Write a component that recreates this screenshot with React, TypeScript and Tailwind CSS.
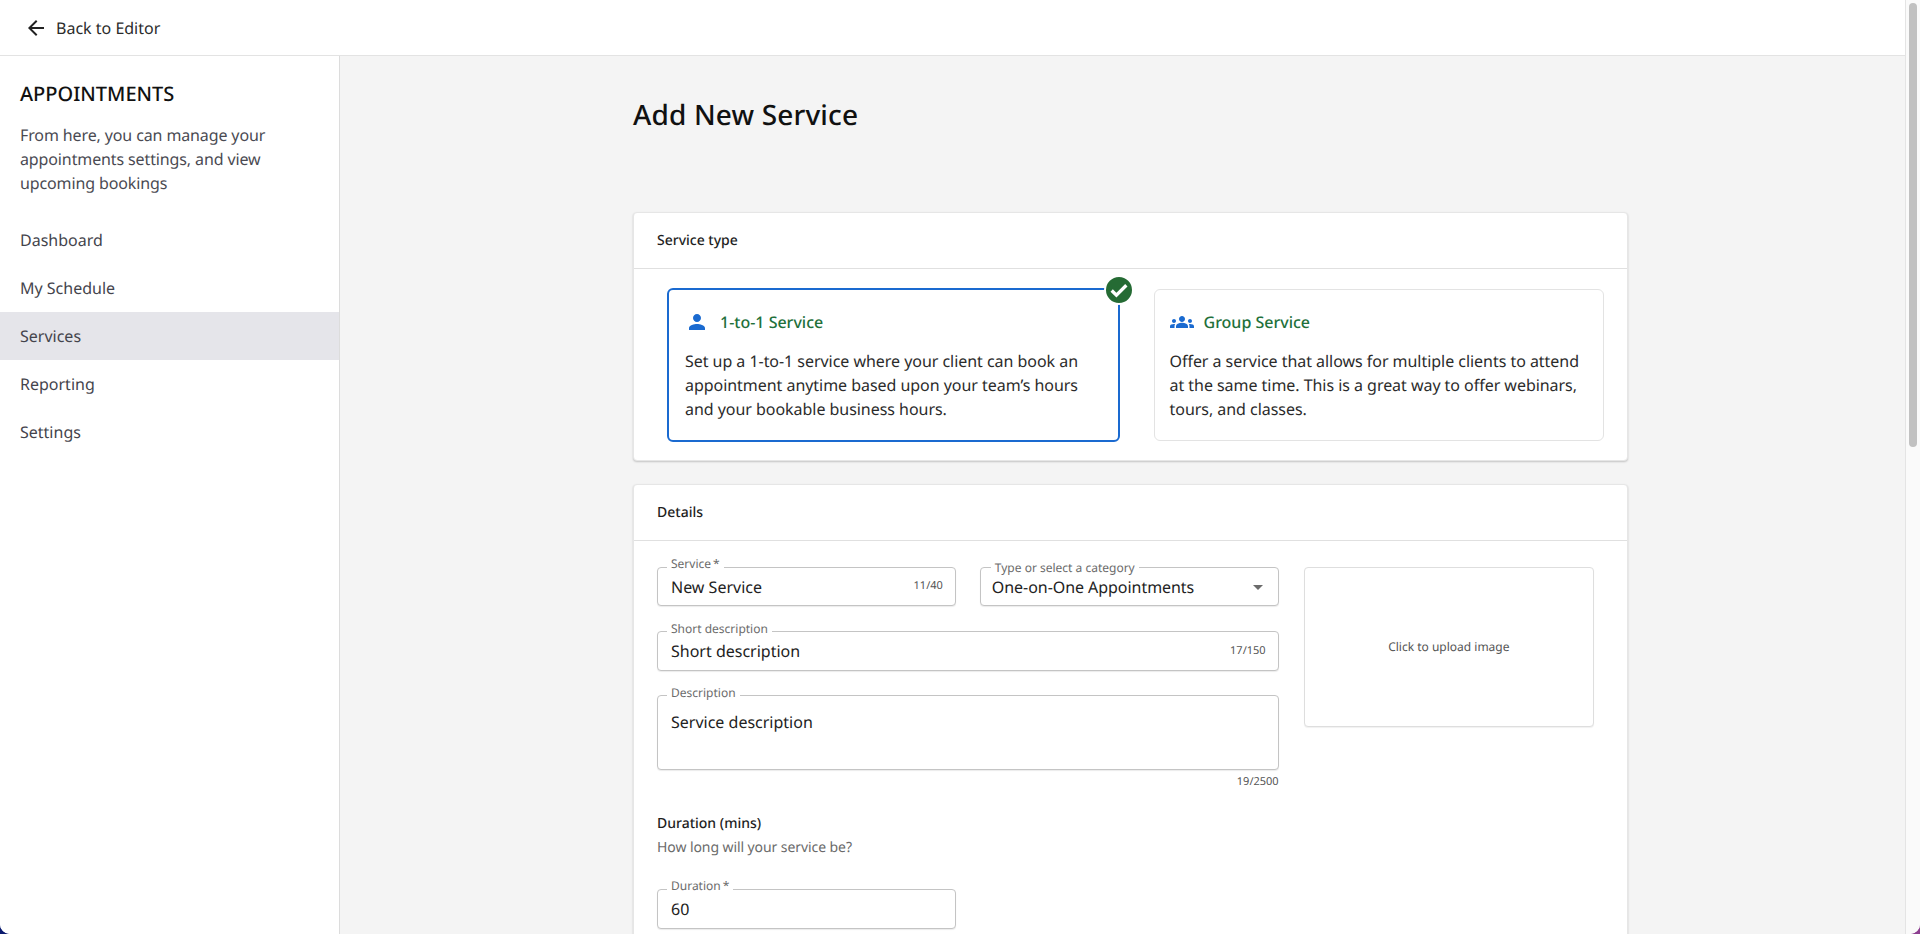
import React from "react";

const font = { fontFamily: '"Noto Sans", sans-serif' };

function Field({ label, top = "-top-[11px]", left = "left-[9px]", className = "", children }: { label: string; top?: string; left?: string; className?: string; children: React.ReactNode }) {
  return (
    <div className={`relative rounded-[4px] border border-[#c4c4c4] bg-white shadow-[0_1px_1px_rgba(0,0,0,0.08)] ${className}`}>
      <span className={`absolute ${top} ${left} bg-white px-[4px] text-[12px] leading-[16px] text-[#6b6b6b]`}>{label}</span>
      {children}
    </div>
  );
}

function Card({ title, children }: { title: string; children: React.ReactNode }) {
  return (
    <section className="rounded-[4px] border border-[#e6e6e6] bg-white shadow-[0_1px_2px_rgba(0,0,0,0.2)]">
      <h2 className="flex h-[56px] items-center border-b border-[#e0e0e0] pl-[23px] text-[14px] font-medium text-[#1f1f1f]">{title}</h2>
      {children}
    </section>
  );
}

export default function App() {
  return (
    <div style={font} className="h-screen w-screen overflow-hidden bg-gradient-to-r from-[#0a1a6e] to-[#8d3f90] [text-rendering:geometricPrecision]">
      <div className="flex h-full overflow-hidden rounded-b-[10px] bg-white">
        <div className="flex min-w-0 flex-1 flex-col">
          <header className="flex h-[56px] shrink-0 items-center border-b border-[#e3e3e3] bg-white pl-[24px] text-[16px] text-[#2b2b2b]">
            <svg width="24" height="24" viewBox="0 0 24 24" fill="#222" className="mr-[8px]">
              <path d="M20 11H7.83l5.59-5.59L12 4l-8 8 8 8 1.41-1.41L7.83 13H20v-2z" />
            </svg>
            Back to Editor
          </header>
          <div className="flex min-h-0 flex-1">
            <aside className="w-[340px] shrink-0 border-r border-[#dcdcdc] bg-white">
              <h1 className="mt-[24px] pl-[20px] text-[20px] font-medium leading-[28px] text-[#111]">APPOINTMENTS</h1>
              <p className="mt-[15px] pl-[20px] pr-[40px] text-[16px] leading-[24px] tracking-[-0.12px] text-[#4a4a52]">
                From here, you can manage your appointments settings, and view upcoming bookings
              </p>
              <nav className="mt-[21px] text-[16px] text-[#44444c]">
                <div className="flex h-[48px] items-center pl-[20px]">Dashboard</div>
                <div className="flex h-[48px] items-center pl-[20px]">My Schedule</div>
                <div className="flex h-[48px] items-center bg-[#e5e5ea] pl-[20px]">Services</div>
                <div className="flex h-[48px] items-center pl-[20px]">Reporting</div>
                <div className="flex h-[48px] items-center pl-[20px]">Settings</div>
              </nav>
            </aside>
            <main className="min-w-0 flex-1 overflow-hidden bg-[#f4f4f4] pl-[293px]">
              <div className="w-[995px]">
                <h1 className="pt-[39px] text-[28px] font-medium leading-[40px] tracking-[0.15px] text-[#111]">Add New Service</h1>
                <div className="mt-[77px] flex flex-col gap-[23px]">
                  <Card title="Service type">
                    <div className="grid grid-cols-2 gap-[35px] pb-[19px] pl-[34px] pr-[23px] pt-[20px]">
                      <div className="relative -m-px rounded-[6px] border-2 border-[#1a6ad0] pb-[19px] pl-[16px] pr-[15px] pt-[16px]">
                        <div className="flex h-[32px] items-center gap-[11px] text-[16px] font-medium text-[#22703a]">
                          <svg width="24" height="24" viewBox="0 0 24 24" fill="#1a6ad0">
                            <path d="M12 12c2.21 0 4-1.79 4-4s-1.79-4-4-4-4 1.79-4 4 1.79 4 4 4zm0 2c-2.67 0-8 1.34-8 4v2h16v-2c0-2.66-5.33-4-8-4z" />
                          </svg>
                          1-to-1 Service
                        </div>
                        <p className="mt-[11px] text-[16px] leading-[24px] tracking-[-0.04px] text-[#2b2b2b]">
                          Set up a 1-to-1 service where your client can book an appointment anytime based upon your team’s hours and your bookable business hours.
                        </p>
                        <span className="absolute -right-[16px] -top-[15px] flex h-[30px] w-[30px] items-center justify-center rounded-full border-2 border-white bg-[#256b34]">
                          <svg width="22" height="22" viewBox="0 0 24 24" fill="none" stroke="#fff" strokeWidth="3.6">
                            <path d="M4 12.5l5.2 5.2L20 6.8" />
                          </svg>
                        </span>
                      </div>
                      <div className="rounded-[6px] border border-[#e3e3e3] px-[15px] pb-[19px] pt-[16px]">
                        <div className="flex h-[32px] items-center gap-[10px] text-[16px] font-medium text-[#22703a]">
                          <svg width="24" height="24" viewBox="0 0 24 24" fill="#1a6ad0">
                            <path d="M4,13c1.1,0,2-0.9,2-2c0-1.1-0.9-2-2-2s-2,0.9-2,2C2,12.1,2.9,13,4,13z M5.13,14.1C4.76,14.04,4.39,14,4,14 c-0.99,0-1.93,0.21-2.78,0.58C0.48,14.9,0,15.62,0,16.43V18l4.5,0v-1.61C4.5,15.56,4.73,14.78,5.13,14.1z M20,13c1.1,0,2-0.9,2-2 c0-1.1-0.9-2-2-2s-2,0.9-2,2C18,12.1,18.9,13,20,13z M24,16.43c0-0.81-0.48-1.53-1.22-1.85C21.93,14.21,20.99,14,20,14 c-0.39,0-0.76,0.04-1.13,0.1c0.4,0.68,0.63,1.46,0.63,2.29V18l4.5,0V16.43z M16.24,13.65c-1.17-0.52-2.61-0.9-4.24-0.9 c-1.63,0-3.07,0.39-4.24,0.9C6.68,14.13,6,15.21,6,16.39V18h12v-1.61C18,15.21,17.32,14.13,16.24,13.65z M12,12c1.66,0,3-1.34,3-3 c0-1.66-1.34-3-3-3S9,7.34,9,9C9,10.66,10.34,12,12,12z" />
                          </svg>
                          Group Service
                        </div>
                        <p className="mt-[11px] text-[16px] leading-[24px] tracking-[-0.04px] text-[#2b2b2b]">
                          Offer a service that allows for multiple clients to attend at the same time. This is a great way to offer webinars, tours, and classes.
                        </p>
                      </div>
                    </div>
                  </Card>
                  <Card title="Details">
                    <div className="flex gap-[25px] pl-[23px] pr-[33px] pt-[26px]">
                      <div className="w-[623px]">
                        <div className="grid grid-cols-2 gap-[24px]">
                          <Field label={"Service\u2009*"} top="-top-[12px]" className="flex h-[39px] items-center justify-between pl-[13px] pr-[12px]">
                            <span className="text-[16px] text-[#222]">New Service</span>
                            <span className="text-[11px] text-[#555]">11/40</span>
                          </Field>
                          <Field label="Type or select a category" top="-top-[8px]" left="left-[10px]" className="flex h-[39px] items-center justify-between pl-[11px] pr-[8px]">
                            <span className="text-[16px] tracking-[-0.05px] text-[#222]">One-on-One Appointments</span>
                            <svg width="24" height="24" viewBox="0 0 24 24" fill="#6b6b6b">
                              <path d="M7 10l5 5 5-5z" />
                            </svg>
                          </Field>
                        </div>
                        <Field label="Short description" top="-top-[11px]" className="mt-[25px] flex h-[40px] items-center justify-between pl-[13px] pr-[12px]">
                          <span className="text-[16px] text-[#222]">Short description</span>
                          <span className="text-[11px] text-[#555]">17/150</span>
                        </Field>
                        <Field label="Description" top="-top-[11px]" className="mt-[24px] h-[75px] pl-[13px] pt-[14px]">
                          <span className="text-[16px] leading-[24px] text-[#222]">Service description</span>
                        </Field>
                        <div className="mt-[2px] text-right text-[11px] leading-[20px] text-[#555]">19/2500</div>
                        <h3 className="mt-[20px] text-[14px] font-medium leading-[24px] text-[#1f1f1f]">Duration (mins)</h3>
                        <p className="text-[14px] leading-[24px] tracking-[-0.08px] text-[#6b6b6b]">How long will your service be?</p>
                        <Field label={"Duration\u2009*"} top="-top-[12px]" className="mt-[29px] flex h-[40px] w-[299px] items-center pl-[13px]">
                          <span className="text-[16px] text-[#222]">60</span>
                        </Field>
                        <div className="h-[40px]" />
                      </div>
                      <div className="flex h-[160px] w-[291px] items-center justify-center rounded-[4px] border border-[#dedede] bg-white text-[12px] text-[#555] shadow-[0_1px_1px_rgba(0,0,0,0.06)]">
                        Click to upload image
                      </div>
                    </div>
                  </Card>
                </div>
              </div>
            </main>
          </div>
        </div>
        <div className="w-[15px] shrink-0 border-l border-[#e4e4e4] bg-[#fafafa] pl-[3px] pt-[3px]">
          <div className="h-[444px] w-[8px] rounded-full bg-[#c1c1c1]" />
        </div>
      </div>
    </div>
  );
}
